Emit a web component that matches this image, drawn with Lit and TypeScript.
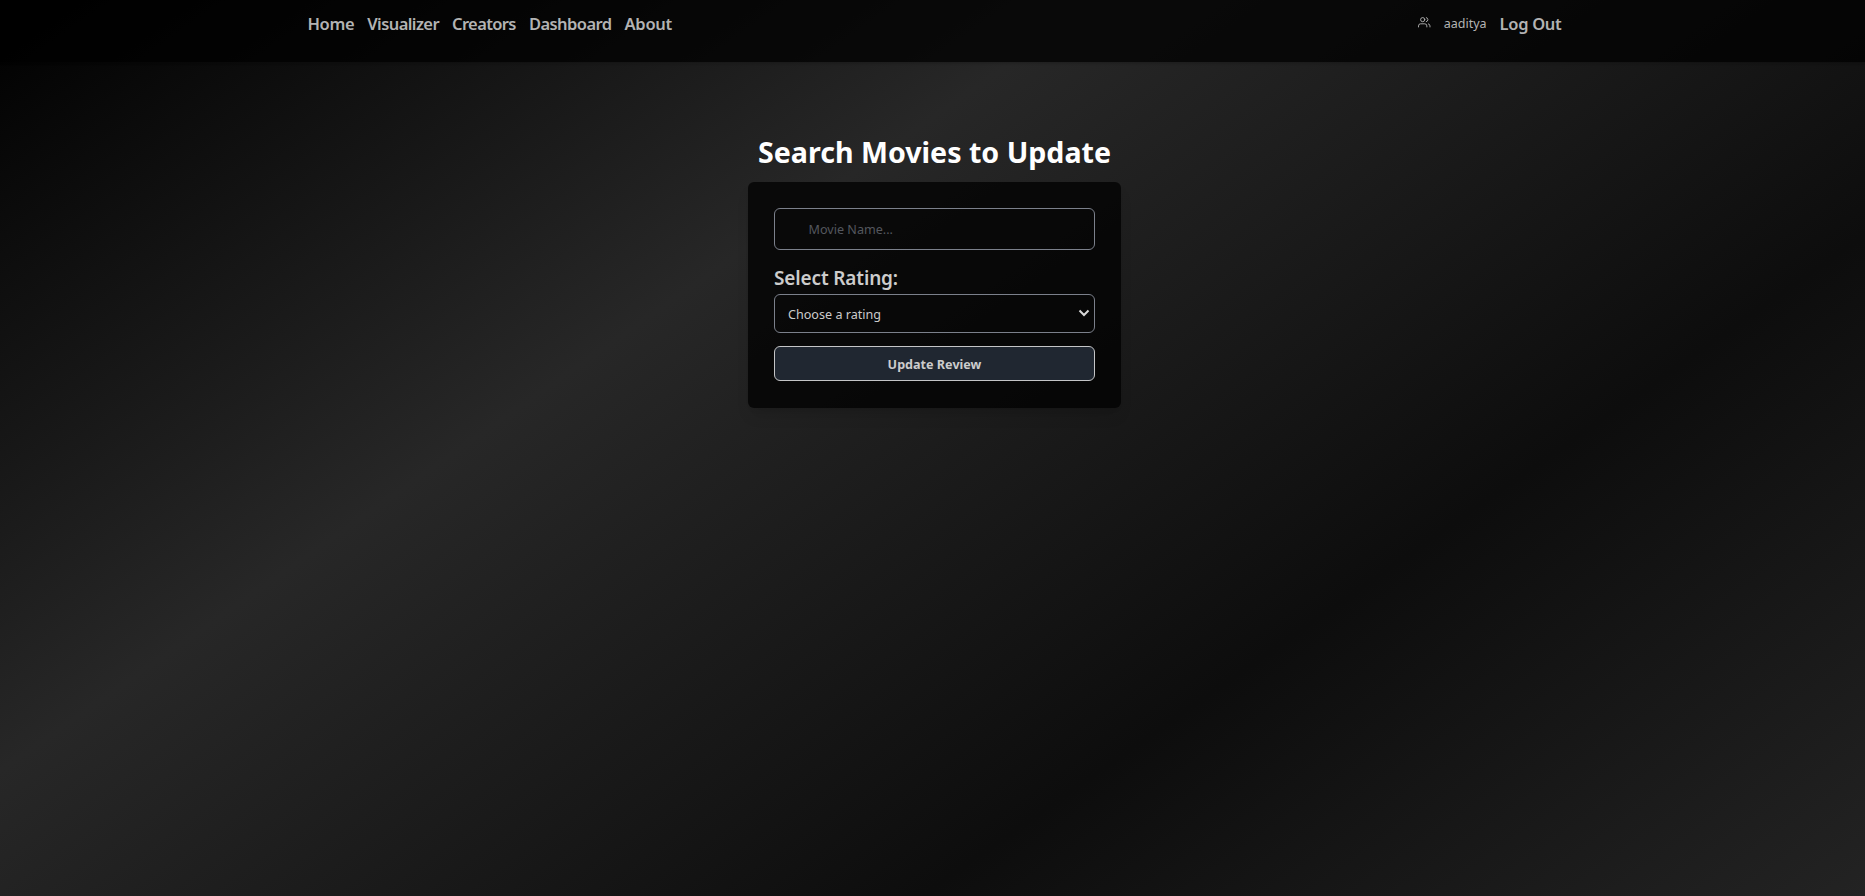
import { LitElement, html, css, svg } from "lit";

interface NavLink {
  label: string;
  tracking: number;
}

const LINKS: NavLink[] = [
  { label: "Home", tracking: -0.35 },
  { label: "Visualizer", tracking: -0.58 },
  { label: "Creators", tracking: -0.62 },
  { label: "Dashboard", tracking: -0.56 },
  { label: "About", tracking: -0.28 },
];

const usersIcon = svg`
  <path d="M17 21v-2a4 4 0 0 0-4-4H5a4 4 0 0 0-4 4v2" />
  <circle cx="9" cy="7" r="4" />
  <path d="M23 21v-2a4 4 0 0 0-3-3.87" />
  <path d="M16 3.13a4 4 0 0 1 0 7.75" />
`;

class SiteHeader extends LitElement {
  static styles = css`
    :host {
      display: block;
      height: 62px;
      box-sizing: border-box;
      background: rgba(0, 0, 0, 0.75);
      box-shadow: 0 1px 3px rgba(0, 0, 0, 0.1), 0 1px 2px rgba(0, 0, 0, 0.1);
      color: #b3b3b3;
    }
    .bar {
      display: flex;
      justify-content: space-between;
      width: 1258px;
      margin: 0 auto;
      padding: 12px 0 0 4px;
      box-sizing: border-box;
    }
    nav,
    .account {
      display: flex;
      align-items: center;
      gap: 13px;
      height: 24px;
    }
    .link {
      font-size: 16.5px;
      font-weight: 600;
      line-height: 24px;
      color: inherit;
      text-decoration: none;
    }
    .logout {
      letter-spacing: -0.3px;
    }
    .user {
      font-size: 12.5px;
      line-height: 20px;
    }
    .icon {
      width: 12.5px;
      height: 12.5px;
      margin-bottom: 3px;
      fill: none;
      stroke: currentColor;
      stroke-width: 1.8;
      stroke-linecap: round;
      stroke-linejoin: round;
    }
  `;

  render() {
    return html`
      <div class="bar">
        <nav>
          ${LINKS.map(
            (l) => html`<a class="link" style="letter-spacing:${l.tracking}px">${l.label}</a>`
          )}
        </nav>
        <div class="account">
          <svg class="icon" viewBox="0 0 24 24">${usersIcon}</svg>
          <span class="user">aaditya</span>
          <a class="link logout">Log Out</a>
        </div>
      </div>
    `;
  }
}
customElements.define("site-header", SiteHeader);

class ReviewForm extends LitElement {
  static styles = css`
    :host {
      display: flex;
      flex-direction: column;
      width: 373px;
      height: 226px;
      box-sizing: border-box;
      padding: 26px;
      border-radius: 6px;
      background: rgba(0, 0, 0, 0.75);
      box-shadow: 0 10px 15px -3px rgba(0, 0, 0, 0.1), 0 4px 6px -4px rgba(0, 0, 0, 0.1);
      color: #cccccc;
    }
    input,
    .select,
    button {
      box-sizing: border-box;
      width: 321px;
      border: 1px solid #7b808b;
      border-radius: 6px;
      background: transparent;
      color: inherit;
      font-family: inherit;
      font-size: 12.6px;
      outline: none;
      margin: 0;
    }
    input {
      height: 42px;
      padding: 0 13px 0 33.5px;
    }
    input::placeholder {
      color: #54575e;
      opacity: 1;
    }
    .label {
      margin-top: 14px;
      height: 30px;
      line-height: 28px;
      font-size: 19px;
      font-weight: 600;
      letter-spacing: -0.14px;
    }
    .select {
      display: flex;
      align-items: center;
      justify-content: space-between;
      height: 39px;
      padding: 1px 4px 0 13px;
    }
    .chevron {
      width: 12px;
      height: 8px;
      margin-bottom: 3px;
      fill: none;
      stroke: #d8d8d8;
      stroke-width: 2;
    }
    button {
      height: 35px;
      margin-top: 13px;
      padding: 1px 0 0;
      border-color: #c4c5c7;
      background: #202731;
      font-weight: 700;
    }
  `;

  render() {
    return html`
      <input type="text" placeholder="Movie Name..." />
      <div class="label">Select Rating:</div>
      <div class="select" role="combobox">
        <span>Choose a rating</span>
        <svg class="chevron" viewBox="0 0 12 8"><path d="M1.5 1.5 6 6l4.5-4.5" /></svg>
      </div>
      <button>Update Review</button>
    `;
  }
}
customElements.define("review-form", ReviewForm);

class AppRoot extends LitElement {
  static styles = css`
    :host {
      display: block;
      height: 100vh;
      overflow: hidden;
      font-family: "Noto Sans", "Open Sans", sans-serif;
      background: linear-gradient(145deg, #000000 0%, #272727 35%, #0d0d0d 70%, #232323 100%);
    }
    main {
      display: flex;
      flex-direction: column;
      align-items: center;
      padding-top: 70px;
      padding-left: 4px;
    }
    h1 {
      margin: 0;
      height: 50px;
      line-height: 40px;
      font-size: 28.6px;
      font-weight: 700;
      color: #ffffff;
    }
  `;

  render() {
    return html`
      <site-header></site-header>
      <main>
        <h1>Search Movies to Update</h1>
        <review-form></review-form>
      </main>
    `;
  }
}
customElements.define("app-root", AppRoot);
